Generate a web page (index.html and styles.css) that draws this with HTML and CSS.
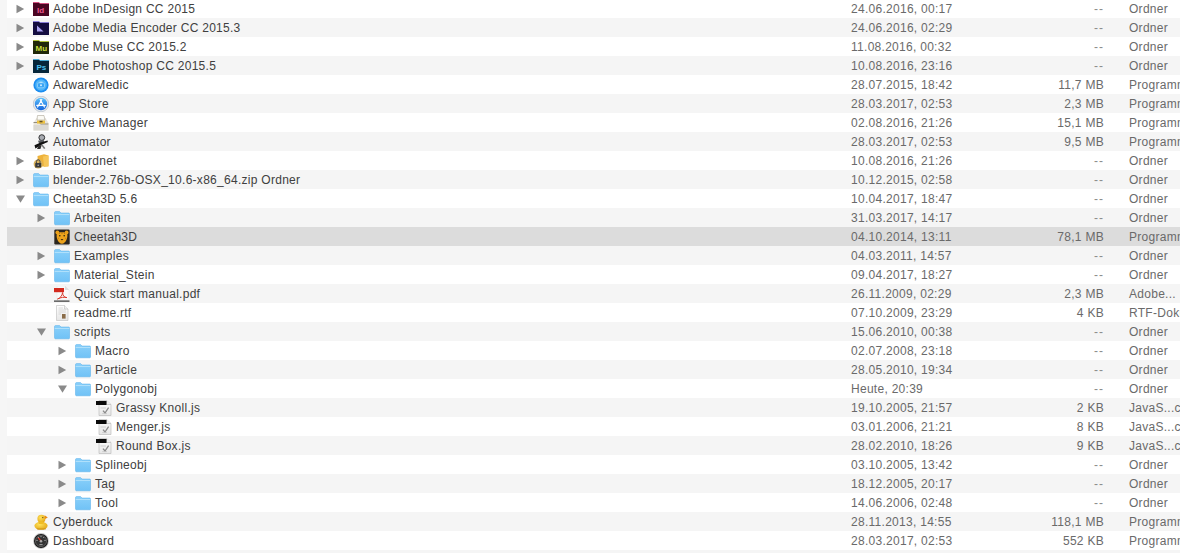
FILE: index.html
```html
<!DOCTYPE html>
<html lang="de">
<head>
<meta charset="utf-8">
<title>Programme</title>
<link rel="stylesheet" href="styles.css">
</head>
<body>
<svg class="defs" aria-hidden="true">
  <defs>
    <linearGradient id="fb" x1="0" y1="0" x2="0" y2="1"><stop offset="0" stop-color="#8ad0fa"/><stop offset="1" stop-color="#70c2f6"/></linearGradient>
    <linearGradient id="page" x1="0" y1="0" x2="0" y2="1"><stop offset="0" stop-color="#fff"/><stop offset="1" stop-color="#e6e6e6"/></linearGradient>
    <radialGradient id="duck" cx=".4" cy=".35" r=".75"><stop offset="0" stop-color="#ffe25a"/><stop offset="1" stop-color="#e0a010"/></radialGradient>
    <linearGradient id="as" x1="0" y1="0" x2="0" y2="1"><stop offset="0" stop-color="#5cc0fa"/><stop offset="1" stop-color="#1565dd"/></linearGradient>
  </defs>
  <symbol id="tr" viewBox="0 0 9 10"><path d="M.5 .8 8.2 5 .5 9.2z" fill="#8a8a8a"/></symbol>
  <symbol id="td" viewBox="0 0 9 10"><path d="M0 1.5 9 1.5 4.5 8.8z" fill="#8a8a8a"/></symbol>
  <symbol id="folder" viewBox="0 0 16 16"><path d="M.5 2.6C.5 2 1 1.6 1.6 1.6H5.6L7 3H14.6C15.2 3 15.6 3.5 15.6 4V13.8C15.6 14.4 15.2 14.8 14.6 14.8H1.5C1 14.8 .5 14.4 .5 13.8z" fill="url(#fb)" stroke="#55ade8" stroke-width=".5"/><path d="M.7 4.5H15.4" stroke="#c2e8fc" stroke-width=".7"/></symbol>
  <symbol id="me" viewBox="0 0 16 16"><path d="M0 1.5H6L7 2.5H16V15H0z" fill="#140d40"/><path d="M0 1.5H6L7 2.5H16" fill="none" stroke="#8a7de8" stroke-width=".8"/><path d="M4 5.5 10.5 11.5H4z" fill="#a9a0f0"/></symbol>
  <symbol id="adware" viewBox="0 0 16 16"><circle cx="8" cy="8" r="7.6" fill="#1c8df0"/><circle cx="8" cy="8" r="5.8" fill="#4fb4f8"/><rect x="4.5" y="5.8" width="7" height="5" rx="1.4" fill="#3aa5f5" stroke="#b5e1fb" stroke-width=".6"/><rect x="6.5" y="4.6" width="3" height="1.4" fill="#b5e1fb"/><circle cx="8" cy="8.2" r="1" fill="#d5efff"/></symbol>
  <symbol id="appstore" viewBox="0 0 16 16"><circle cx="8" cy="8" r="7.8" fill="#e4e8ec" stroke="#8a99a8" stroke-width=".4"/><circle cx="8" cy="8" r="6.2" fill="url(#as)"/><path d="M8.8 3.5 4.6 11M7.2 3.5 11.4 11M3.8 9.4H12.2" stroke="#fff" stroke-width="1.2" fill="none" stroke-linecap="round"/></symbol>
  <symbol id="archive" viewBox="0 0 16 16"><path d="M.5 8 3.5 3H12.5L15.5 8V15.5H.5z" fill="#e9e5dc"/><path d="M4.5 .5H11L12 5H4z" fill="#fbfaf5" stroke="#9e9987" stroke-width=".5"/><path d="M.5 7.5H6.5L7.5 9H15.5" fill="none" stroke="#6f6653" stroke-width=".7"/><rect x="4" y="5.6" width="8" height="3" fill="#eec23f"/><rect x=".5" y="10" width="15" height="5.5" fill="#dbd9d3"/><rect x="6.5" y="5.8" width="3" height="1.5" fill="#5f5028"/></symbol>
  <symbol id="automator" viewBox="0 0 16 16"><circle cx="8.8" cy="3.6" r="2.9" fill="#a8abb1" stroke="#222" stroke-width=".9"/><path d="M5 6.8 10.5 5.8 11.5 9.3 6.8 11.5z" fill="#55585d"/><path d="M1.5 11.2 8.2 8.3 14.6 6.6 14.8 8 8.8 10.4 2.4 14.4z" fill="#111"/><path d="M5.5 11.5 4 15H7.4L8.8 11z" fill="#2b2b2b"/><path d="M9.5 10.6 12.4 14.2 11 15 8.4 11.6z" fill="#777"/></symbol>
  <symbol id="bila" viewBox="0 0 16 16"><path d="M4.5 3 11 1.2 15.5 2.4V13.5H5z" fill="#eeb23a"/><path d="M10 3.5 15.5 2.4V13L11 14z" fill="#f6c65a"/><circle cx="5.2" cy="11" r="4.6" fill="#d9b25c"/><path d="M3.4 10V8.6A1.8 1.8 0 0 1 7 8.6V10" fill="none" stroke="#444" stroke-width="1"/><rect x="2.2" y="10" width="6" height="4.6" rx=".6" fill="#3a3a3a"/><circle cx="5.2" cy="12.2" r=".8" fill="#aaa"/></symbol>
  <symbol id="cheetah" viewBox="0 0 16 16"><rect x=".3" y=".5" width="15.4" height="15" rx="1.2" fill="#2b2620"/><circle cx="3.4" cy="3.4" r="1.9" fill="#e89f1a"/><circle cx="12.6" cy="3.4" r="1.9" fill="#e89f1a"/><path d="M2.8 5C2.8 2.6 13.2 2.6 13.2 5 14 8.5 12 14.4 8 14.8 4 14.4 2 8.5 2.8 5z" fill="#eda31c"/><circle cx="5.8" cy="6.8" r=".8" fill="#221"/><circle cx="10.2" cy="6.8" r=".8" fill="#221"/><path d="M6.6 10H9.4L8 11.6z" fill="#321"/><path d="M5.3 4.2 5.6 5M8 3.8V4.8M10.7 4.2 10.4 5M4.2 9 4.8 9.6M11.8 9 11.2 9.6" stroke="#7a4c08" stroke-width=".6"/></symbol>
  <symbol id="pdf" viewBox="0 0 16 16"><path d="M3 0H11L15 4V14H3z" fill="#fafafa" stroke="#ddd" stroke-width=".4"/><path d="M11 0V4H15z" fill="#dedede"/><rect x="0" y="2" width="10" height="4.2" fill="#d32a1e"/><path d="M8.6 6.5C8 9.8 6.5 12 3.5 13 7 11.2 10 11 13 11.6 10 11.4 8.8 9.8 8.6 6.5z" fill="none" stroke="#d83a2c" stroke-width="1"/><rect x="0" y="14.6" width="15.5" height="1" fill="#111"/></symbol>
  <symbol id="rtf" viewBox="0 0 16 16"><path d="M2.5 .5H10.5L14 4V15.5H2.5z" fill="url(#page)" stroke="#bdbdbd" stroke-width=".6"/><path d="M10.5 .5V4H14" fill="#f2f2f2" stroke="#bdbdbd" stroke-width=".6"/><path d="M4.5 3H9M4.5 5H12M4.5 7H12M4.5 9H7" stroke="#c6c6c6" stroke-width=".6"/><rect x="8" y="9" width="3.6" height="4.6" fill="#8a6d4a"/></symbol>
  <symbol id="js" viewBox="0 0 16 16"><path d="M3 .5H10.5L15 4.5V15.5H3z" fill="url(#page)" stroke="#b5b5b5" stroke-width=".6"/><path d="M10.5 .5V4.5H15" fill="#eee" stroke="#b5b5b5" stroke-width=".6"/><rect x="0" y="1" width="10.5" height="4" fill="#0b0b0b"/><path d="M4.5 8H10" stroke="#bbb" stroke-width=".6"/><path d="M7 10.6 9 13 12.6 7.6" fill="none" stroke="#8a8a8a" stroke-width="1.3"/><path d="M6.2 13.6H11" stroke="#bbb" stroke-width=".6"/></symbol>
  <symbol id="duckicon" viewBox="0 0 16 16"><ellipse cx="8" cy="11.8" rx="6.6" ry="4" fill="url(#duck)"/><circle cx="8.4" cy="4.8" r="4" fill="url(#duck)"/><path d="M5.6 7.5 10 7.5 10.5 10 6 10z" fill="#f0bd24"/><path d="M11.6 1.2 14.8 3.4 12 5z" fill="#e98a12"/><circle cx="9.8" cy="3.6" r=".6" fill="#432"/><path d="M4 15H13" stroke="#b57d08" stroke-width=".6"/></symbol>
  <symbol id="dash" viewBox="0 0 16 16"><circle cx="8" cy="8" r="7.9" fill="#c4c4c4"/><circle cx="8" cy="8" r="7" fill="#161616"/><circle cx="8" cy="8" r="5.6" fill="#333" stroke="#7d7d7d" stroke-width=".6"/><path d="M8 8 5.2 4.6" stroke="#e23a2a" stroke-width="1.2"/><path d="M3.4 7.4H4.6M11.4 7.4H12.6M8 3V4.2M5 4 5.6 4.8M11 4 10.4 4.8" stroke="#e4e4e4" stroke-width=".7"/><circle cx="8" cy="8.3" r="1.3" fill="#aaa"/><rect x="6.4" y="11" width="3.2" height="1.2" fill="#999"/></symbol>
</svg>
<div class="page">
  <div class="strip"></div>
  <main class="list">
    <div class="row"><div class="name l0"><svg class="tri"><use href="#tr"/></svg><svg class="ico" viewBox="0 0 16 16"><path d="M0 1.5H6L7 2.5H16V15H0z" fill="#4a0522"/><path d="M0 1.5H6L7 2.5H16" fill="none" stroke="#e0457d" stroke-width=".8"/><text x="4" y="12" class="ai ai-id">Id</text></svg><span>Adobe InDesign CC 2015</span></div><div class="date">24.06.2016, 00:17</div><div class="size none">--</div><div class="kind">Ordner</div></div>
    <div class="row"><div class="name l0"><svg class="tri"><use href="#tr"/></svg><svg class="ico"><use href="#me"/></svg><span>Adobe Media Encoder CC 2015.3</span></div><div class="date">24.06.2016, 02:29</div><div class="size none">--</div><div class="kind">Ordner</div></div>
    <div class="row"><div class="name l0"><svg class="tri"><use href="#tr"/></svg><svg class="ico" viewBox="0 0 16 16"><path d="M0 1.5H6L7 2.5H16V15H0z" fill="#20280a"/><path d="M0 1.5H6L7 2.5H16" fill="none" stroke="#b9cf2a" stroke-width=".8"/><text x="2.5" y="12" class="ai ai-mu">Mu</text></svg><span>Adobe Muse CC 2015.2</span></div><div class="date">11.08.2016, 00:32</div><div class="size none">--</div><div class="kind">Ordner</div></div>
    <div class="row"><div class="name l0"><svg class="tri"><use href="#tr"/></svg><svg class="ico" viewBox="0 0 16 16"><path d="M0 1.5H6L7 2.5H16V15H0z" fill="#06263a"/><path d="M0 1.5H6L7 2.5H16" fill="none" stroke="#3db4e6" stroke-width=".8"/><text x="3.5" y="12" class="ai ai-ps">Ps</text></svg><span>Adobe Photoshop CC 2015.5</span></div><div class="date">10.08.2016, 23:16</div><div class="size none">--</div><div class="kind">Ordner</div></div>
    <div class="row"><div class="name l0"><i class="tri"></i><svg class="ico"><use href="#adware"/></svg><span>AdwareMedic</span></div><div class="date">28.07.2015, 18:42</div><div class="size">11,7 MB</div><div class="kind">Programm</div></div>
    <div class="row"><div class="name l0"><i class="tri"></i><svg class="ico"><use href="#appstore"/></svg><span>App Store</span></div><div class="date">28.03.2017, 02:53</div><div class="size">2,3 MB</div><div class="kind">Programm</div></div>
    <div class="row"><div class="name l0"><i class="tri"></i><svg class="ico"><use href="#archive"/></svg><span>Archive Manager</span></div><div class="date">02.08.2016, 21:26</div><div class="size">15,1 MB</div><div class="kind">Programm</div></div>
    <div class="row"><div class="name l0"><i class="tri"></i><svg class="ico"><use href="#automator"/></svg><span>Automator</span></div><div class="date">28.03.2017, 02:53</div><div class="size">9,5 MB</div><div class="kind">Programm</div></div>
    <div class="row"><div class="name l0"><svg class="tri"><use href="#tr"/></svg><svg class="ico"><use href="#bila"/></svg><span>Bilabordnet</span></div><div class="date">10.08.2016, 21:26</div><div class="size none">--</div><div class="kind">Ordner</div></div>
    <div class="row"><div class="name l0"><svg class="tri"><use href="#tr"/></svg><svg class="ico"><use href="#folder"/></svg><span>blender-2.76b-OSX_10.6-x86_64.zip Ordner</span></div><div class="date">10.12.2015, 02:58</div><div class="size none">--</div><div class="kind">Ordner</div></div>
    <div class="row"><div class="name l0"><svg class="tri"><use href="#td"/></svg><svg class="ico"><use href="#folder"/></svg><span>Cheetah3D 5.6</span></div><div class="date">10.04.2017, 18:47</div><div class="size none">--</div><div class="kind">Ordner</div></div>
    <div class="row"><div class="name l1"><svg class="tri"><use href="#tr"/></svg><svg class="ico"><use href="#folder"/></svg><span>Arbeiten</span></div><div class="date">31.03.2017, 14:17</div><div class="size none">--</div><div class="kind">Ordner</div></div>
    <div class="row selected"><div class="name l1"><i class="tri"></i><svg class="ico"><use href="#cheetah"/></svg><span>Cheetah3D</span></div><div class="date">04.10.2014, 13:11</div><div class="size">78,1 MB</div><div class="kind">Programm</div></div>
    <div class="row"><div class="name l1"><svg class="tri"><use href="#tr"/></svg><svg class="ico"><use href="#folder"/></svg><span>Examples</span></div><div class="date">04.03.2011, 14:57</div><div class="size none">--</div><div class="kind">Ordner</div></div>
    <div class="row"><div class="name l1"><svg class="tri"><use href="#tr"/></svg><svg class="ico"><use href="#folder"/></svg><span>Material_Stein</span></div><div class="date">09.04.2017, 18:27</div><div class="size none">--</div><div class="kind">Ordner</div></div>
    <div class="row"><div class="name l1"><i class="tri"></i><svg class="ico"><use href="#pdf"/></svg><span>Quick start manual.pdf</span></div><div class="date">26.11.2009, 02:29</div><div class="size">2,3 MB</div><div class="kind">Adobe...</div></div>
    <div class="row"><div class="name l1"><i class="tri"></i><svg class="ico"><use href="#rtf"/></svg><span>readme.rtf</span></div><div class="date">07.10.2009, 23:29</div><div class="size">4 KB</div><div class="kind">RTF-Dokument</div></div>
    <div class="row"><div class="name l1"><svg class="tri"><use href="#td"/></svg><svg class="ico"><use href="#folder"/></svg><span>scripts</span></div><div class="date">15.06.2010, 00:38</div><div class="size none">--</div><div class="kind">Ordner</div></div>
    <div class="row"><div class="name l2"><svg class="tri"><use href="#tr"/></svg><svg class="ico"><use href="#folder"/></svg><span>Macro</span></div><div class="date">02.07.2008, 23:18</div><div class="size none">--</div><div class="kind">Ordner</div></div>
    <div class="row"><div class="name l2"><svg class="tri"><use href="#tr"/></svg><svg class="ico"><use href="#folder"/></svg><span>Particle</span></div><div class="date">28.05.2010, 19:34</div><div class="size none">--</div><div class="kind">Ordner</div></div>
    <div class="row"><div class="name l2"><svg class="tri"><use href="#td"/></svg><svg class="ico"><use href="#folder"/></svg><span>Polygonobj</span></div><div class="date">Heute, 20:39</div><div class="size none">--</div><div class="kind">Ordner</div></div>
    <div class="row"><div class="name l3"><i class="tri"></i><svg class="ico"><use href="#js"/></svg><span>Grassy Knoll.js</span></div><div class="date">19.10.2005, 21:57</div><div class="size">2 KB</div><div class="kind">JavaS...cript</div></div>
    <div class="row"><div class="name l3"><i class="tri"></i><svg class="ico"><use href="#js"/></svg><span>Menger.js</span></div><div class="date">03.01.2006, 21:21</div><div class="size">8 KB</div><div class="kind">JavaS...cript</div></div>
    <div class="row"><div class="name l3"><i class="tri"></i><svg class="ico"><use href="#js"/></svg><span>Round Box.js</span></div><div class="date">28.02.2010, 18:26</div><div class="size">9 KB</div><div class="kind">JavaS...cript</div></div>
    <div class="row"><div class="name l2"><svg class="tri"><use href="#tr"/></svg><svg class="ico"><use href="#folder"/></svg><span>Splineobj</span></div><div class="date">03.10.2005, 13:42</div><div class="size none">--</div><div class="kind">Ordner</div></div>
    <div class="row"><div class="name l2"><svg class="tri"><use href="#tr"/></svg><svg class="ico"><use href="#folder"/></svg><span>Tag</span></div><div class="date">18.12.2005, 20:17</div><div class="size none">--</div><div class="kind">Ordner</div></div>
    <div class="row"><div class="name l2"><svg class="tri"><use href="#tr"/></svg><svg class="ico"><use href="#folder"/></svg><span>Tool</span></div><div class="date">14.06.2006, 02:48</div><div class="size none">--</div><div class="kind">Ordner</div></div>
    <div class="row"><div class="name l0"><i class="tri"></i><svg class="ico"><use href="#duckicon"/></svg><span>Cyberduck</span></div><div class="date">28.11.2013, 14:55</div><div class="size">118,1 MB</div><div class="kind">Programm</div></div>
    <div class="row"><div class="name l0"><i class="tri"></i><svg class="ico"><use href="#dash"/></svg><span>Dashboard</span></div><div class="date">28.03.2017, 02:53</div><div class="size">552 KB</div><div class="kind">Programm</div></div>
    <div class="row"><div class="name l0"><i class="tri"></i><svg class="ico"><use href="#folder"/></svg></div></div>
  </main>
</div>
</body>
</html>
```
FILE: styles.css
```css
html, body {
  margin: 0;
  height: 553px;
  overflow: hidden;
  background: #fff;
}
body {
  font-family: "Liberation Sans", Arial, sans-serif;
  font-size: 12px;
  letter-spacing: .28px;
  color: #404040;
}
.defs {
  display: block;
  width: 0;
  height: 0;
}
.page {
  display: flex;
  height: 553px;
  overflow: hidden;
}
.strip {
  flex: 0 0 7px;
  background: #f6f6f6;
}
.list {
  flex: 1;
  min-width: 0;
  margin-top: -1px;
}
.row {
  display: grid;
  grid-template-columns: 844px 170px 83px 1fr;
  align-items: center;
  height: 19px;
  white-space: nowrap;
  overflow: hidden;
}
.row:nth-child(even) {
  background: #f5f5f5;
}
.row.selected {
  background: #dcdcdc;
}
.name {
  display: flex;
  align-items: center;
  min-width: 0;
}
.l0 { padding-left: 9px; }
.l1 { padding-left: 30px; }
.l2 { padding-left: 51px; }
.l3 { padding-left: 72px; }
.tri {
  flex: 0 0 9px;
  width: 9px;
  height: 10px;
  margin-right: 8px;
  display: block;
}
.ico {
  flex: 0 0 16px;
  width: 16px;
  height: 16px;
  margin-right: 4px;
  display: block;
}
.date {
  color: #6a6a6a;
}
.size {
  color: #6a6a6a;
  text-align: right;
}
.size.none {
  color: #8c8c8c;
  letter-spacing: 1px;
}
.kind {
  color: #6a6a6a;
  padding-left: 25px;
}
.ai {
  font-size: 8px;
  font-weight: 700;
  letter-spacing: 0;
}
.ai-id { fill: #f0568f; }
.ai-mu { fill: #c6dc3a; }
.ai-ps { fill: #4cc1f0; }
```
